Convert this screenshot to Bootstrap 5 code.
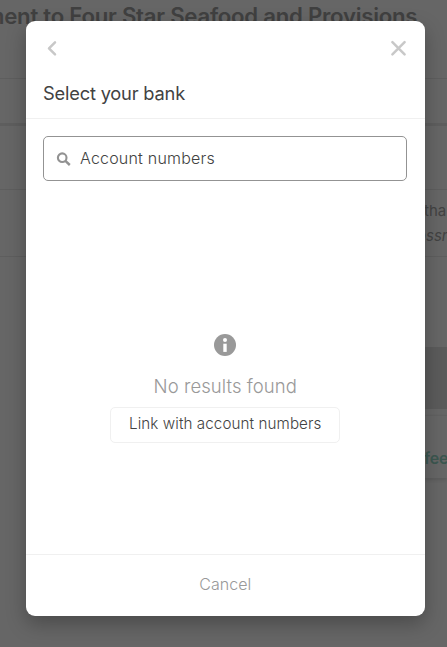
<!DOCTYPE html>
<html lang="en">
<head>
<meta charset="utf-8">
<meta name="viewport" content="width=device-width, initial-scale=1">
<title>Select your bank</title>
<link href="https://cdn.jsdelivr.net/npm/bootstrap@5.3.0/dist/css/bootstrap.min.css" rel="stylesheet">
<style>
body{font-family:Inter,"Liberation Sans",sans-serif;height:647px;overflow:hidden;background:#666;color:#434343}
.page-behind{height:647px;overflow:hidden;background:#666}
.page-title{height:78px;padding-top:1px;margin-left:-15.5px;font-size:22.2px;line-height:30px;font-weight:600;color:#404040;letter-spacing:-.25px;white-space:nowrap}
.band{border-top:1px solid #5e5e5e}
.band-tabs{height:45px}
.band-gap{height:66px;border-top:3px solid #5e5e5e}
.band-note{height:67px;padding-left:424px;padding-top:8px;font-size:15px;line-height:25px;white-space:nowrap}
.band-note em{margin-left:-7px}
.band-rest{height:91px}
.grey-block{height:62px;margin-left:425px;background:#5b5b5b}
.fee-card{height:63px;margin:6px 0 0 424px;padding-top:29px;font-size:16px;line-height:26px;font-weight:600;color:#3c5750;border-top:1px solid #616161;box-shadow:0 2px 3px #5b5b5b;letter-spacing:-.2px}
.sheet-wrap{padding:21px 22px 31px 25.5px}
.sheet{border:0;border-radius:9px;height:595px;box-shadow:0 8px 20px rgba(0,0,0,.27);color:#424242}
.sheet-head{height:98px;border-bottom:1px solid #f0f0f0;padding:18px 18px 0 17.5px}
.icon-btn{height:18px;line-height:0}
.sheet-title{font-size:18.3px;line-height:26px;margin-top:23px;font-weight:400;letter-spacing:-.2px}
.search-box{height:45px;margin:17px 18px 0 17.5px;border:1px solid #939393;border-radius:5px;padding-left:12px}
.search-box input{font-size:16px;letter-spacing:.2px;font-weight:350;color:#424242;margin:0 0 2px 9px;line-height:24px}
.empty{padding-top:153px}
.empty-text{font-size:18.5px;line-height:26px;color:#999;font-weight:300;margin-top:17px;letter-spacing:.07px}
.link-btn,.link-btn:hover{width:230px;height:36px;margin-top:8px;border:1px solid #f0f0f0;border-radius:5px;font-size:15.2px;letter-spacing:.08px;font-weight:350;line-height:22px;padding:4px 0 6px;color:#424242}
.sheet-foot{height:62px;border-top:1px solid #f0f0f0}
.cancel-btn,.cancel-btn:hover{font-size:16px;line-height:24px;color:#999;font-weight:300;border:0;padding:0 0 3px}
</style>
<script src="https://cdn.jsdelivr.net/npm/bootstrap@5.3.0/dist/js/bootstrap.bundle.min.js"></script>
</head>
<body class="position-relative">
<main class="page-behind" aria-hidden="true">
  <div class="page-title">ment to Four Star Seafood and Provisions</div>
  <div class="band band-tabs"></div>
  <div class="band-gap"></div>
  <div class="band band-note"><div>tha</div><em>ossr</em></div>
  <div class="band band-rest"></div>
  <div class="grey-block"></div>
  <div class="fee-card">fee</div>
</main>
<div class="sheet-wrap position-absolute top-0 start-0 w-100 h-100">
  <section class="sheet modal-content bg-white d-flex flex-column" role="dialog" aria-label="Select your bank">
    <header class="sheet-head">
      <div class="d-flex justify-content-between">
        <button class="btn p-0 border-0 icon-btn" aria-label="Back"><svg width="18" height="18" fill="none" stroke="#c8c8c8" stroke-width="2.5" stroke-linecap="round" stroke-linejoin="round"><path d="M12 3.4 6 9.4l6 6"/></svg></button>
        <button class="btn p-0 border-0 icon-btn" aria-label="Close"><svg width="18" height="18" fill="none" stroke="#c8c8c8" stroke-width="2.5" stroke-linecap="round"><path d="m3.4 3.2 12.2 12.2m0-12.2L3.4 15.4"/></svg></button>
      </div>
      <h1 class="sheet-title mb-0">Select your bank</h1>
    </header>
    <div class="search-box d-flex align-items-center">
      <svg width="15" height="15" fill="none" stroke="#929292" stroke-width="2.1"><circle cx="6.2" cy="6.7" r="4.3"/><path d="m9.4 9.9 4.4 4.1" stroke-width="2.4"/></svg>
      <input class="border-0 p-0 bg-transparent flex-grow-1" value="Account numbers" aria-label="Search">
    </div>
    <div class="empty flex-grow-1 d-flex flex-column align-items-center">
      <svg width="22" height="22"><circle cx="11" cy="11" r="11" fill="#999"/><circle cx="11" cy="6" r="2" fill="#fff"/><path d="M9.3 9.7h3.4v8.2H9.3z" fill="#fff"/></svg>
      <p class="empty-text mb-0">No results found</p>
      <button class="btn link-btn">Link with account numbers</button>
    </div>
    <footer class="sheet-foot d-flex align-items-center justify-content-center"><button class="btn cancel-btn">Cancel</button></footer>
  </section>
</div>
</body>
</html>
